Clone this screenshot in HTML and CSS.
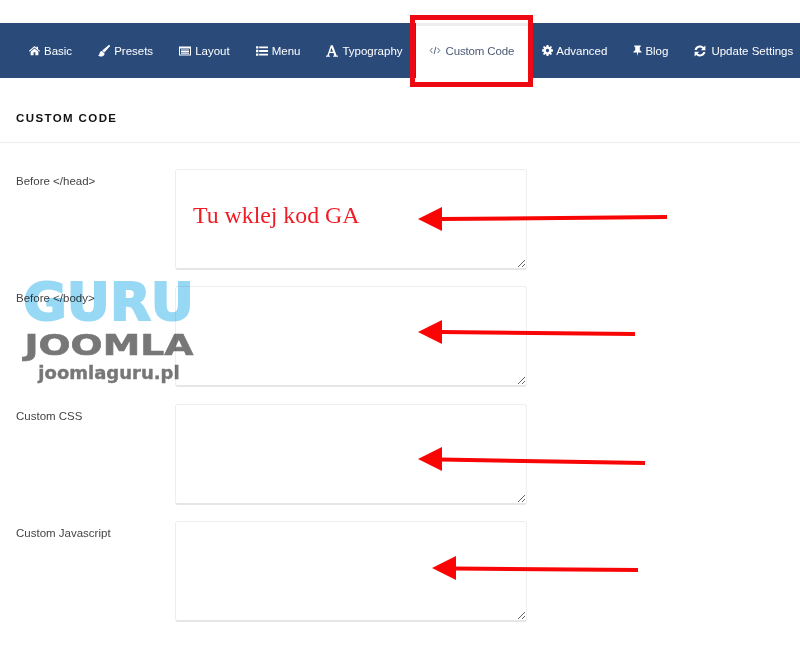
FILE: index.html
```html
<!DOCTYPE html>
<html lang="pl">
<head>
<meta charset="utf-8">
<title>Custom Code</title>
<link rel="stylesheet" href="styles.css">
</head>
<body>
<div class="page">
  <nav class="tabs">
    <a class="tab"><svg class="ico" viewBox="0 0 12 12"><path d="M6 1.200 0 6.400l.7.9L6 2.800l5.300 4.500.7-.9L9.800 4.500V1.800H8v1.200zM1.800 7.300V11.200h3.200V8h2v3.200h3.200V7.300L6 3.800z"/></svg>Basic</a>
    <a class="tab"><svg class="ico ico-brush" viewBox="0 0 12 12"><path d="M11.700.3c-.4-.4-1-.3-1.500.1L4.200 5.400l2.100 2.100 5.200-5.700c.5-.5.6-1.100.2-1.500zM3.800 5.900C2.300 6.100 1.700 7.300 1.500 8.500 1.400 9.600.9 10.200 0 10.600c1.500 1.400 4.700 1.400 6-.3.600-.8.600-1.600.2-2.200z"/></svg>Presets</a>
    <a class="tab"><svg class="ico ico-wide" viewBox="0 0 12 12"><path fill-rule="evenodd" d="M0 1.500h12v9H0zM1 3.500v6h10v-6zM2 4.400h8v1.100H2zM2 6.100h8v1.100H2zM2 7.800h8v.9H2z"/></svg>Layout</a>
    <a class="tab"><svg class="ico ico-list" viewBox="0 0 12 12"><path d="M0 1.200h2.400v2.400H0zM3.200 1.500h8.800v1.800H3.200zM0 4.800h2.400v2.400H0zM3.200 5.100h8.800v1.800H3.200zM0 8.400h2.400v2.400H0zM3.200 8.700h8.800v1.800H3.200z"/></svg>Menu</a>
    <a class="tab"><svg class="ico ico-wide" viewBox="0 0 12 12"><path fill-rule="evenodd" d="M4.800.3h2L10.600 10.500l1.400.3v1H7.200v-1l1.100-.3-.8-2.400H3.600l-.8 2.400 1.100.3v1H0v-1l1.300-.3zM5.500 2.700 4.100 6.800h2.900z"/></svg>Typography</a>
    <a class="tab tab-active"><svg class="ico ico-code" viewBox="0 0 12 12"><path d="M3.200 3.200.8 6l2.400 2.800M8.800 3.200 11.200 6 8.800 8.800M7 2 5 10" fill="none" stroke="currentColor"/></svg>Custom Code</a>
    <a class="tab"><svg class="ico ico-gear" viewBox="0 0 12 12"><path fill-rule="evenodd" d="M5 0h2l.3 1.700 1 .4L9.700 1.100l1.200 1.200-1 1.400.4 1 1.700.3v2l-1.700.3-.4 1 1 1.400-1.200 1.200-1.400-1-1 .4L7 12H5l-.3-1.700-1-.4-1.400 1-1.200-1.200 1-1.400-.4-1L0 7V5l1.700-.3.4-1-1-1.400L2.300 1.100l1.400 1 1-.4zM6 4.200a1.800 1.800 0 1 0 0 3.600 1.800 1.800 0 0 0 0-3.600z"/></svg>Advanced</a>
    <a class="tab"><svg class="ico ico-pin" viewBox="0 0 9 12"><path d="M1 .5h7v1.300L7 2.400v3.200C8.200 6.100 9 7 9 8.200H5.200L4.500 12l-.7-3.800H0C0 7 .8 6.100 2 5.600V2.400L1 1.800z"/></svg>Blog</a>
    <a class="tab"><svg class="ico ico-sync" viewBox="0 0 12 12"><path d="M.6 5C1 2.400 3.200.6 6 .6c1.500 0 2.800.6 3.800 1.500L11.400.6v4.600H6.800l1.700-1.700C7.800 2.900 7 2.500 6 2.500 4.500 2.500 3.100 3.500 2.700 5zM11.400 7c-.4 2.600-2.600 4.400-5.400 4.400-1.500 0-2.800-.6-3.800-1.500L.6 11.400V6.800h4.600L3.500 8.500c.7.6 1.500 1 2.500 1 1.500 0 2.900-1 3.300-2.500z"/></svg>Update Settings</a>
  </nav>

  <h2 class="section-title">CUSTOM CODE</h2>

  <form class="fields">
    <div class="field"><label class="field-label">Before &lt;/head&gt;</label><textarea class="field-input"></textarea></div>
    <div class="field"><label class="field-label">Before &lt;/body&gt;</label><textarea class="field-input"></textarea></div>
    <div class="field"><label class="field-label">Custom CSS</label><textarea class="field-input"></textarea></div>
    <div class="field"><label class="field-label">Custom Javascript</label><textarea class="field-input"></textarea></div>
  </form>

  <div class="note">Tu wklej kod GA</div>

  <div class="watermark">
    <div class="wm-guru">GURU</div>
    <div class="wm-joomla">JOOMLA</div>
    <div class="wm-url">joomlaguru.pl</div>
  </div>

  <svg class="marks" viewBox="0 0 800 659" width="800" height="659">
    <rect x="412.500" y="17.500" width="118" height="67" fill="none" stroke="#ee0a12" stroke-width="5"/>
    <g fill="#f80505" stroke="#f80505" stroke-width="4">
      <path d="M667 217 440 219"/>
      <path d="M635 334 440 332"/>
      <path d="M645 463 440 459.500"/>
      <path d="M638 570 454 568.500"/>
    </g>
    <g fill="#fb0404">
      <path d="M418 219 442 207V231z"/>
      <path d="M418 332 442 320V344z"/>
      <path d="M418 459 442 447V471z"/>
      <path d="M432 568 456 556V580z"/>
    </g>
  </svg>
</div>
</body>
</html>
```
FILE: styles.css
```css
* { box-sizing: border-box; }
html, body { margin: 0; padding: 0; background: #fff; }
body { font-family: "Liberation Sans", Arial, sans-serif; color: #333; overflow: hidden; }
.page { position: relative; width: 800px; height: 659px; padding-top: 23px; overflow: hidden; }

.tabs { display: flex; height: 55px; padding-left: 16px; background: #2a4a7a; }
.tab { display: flex; align-items: center; padding: 0 13px; color: #fff; font-size: 11.500px; white-space: nowrap; }
.ico { width: 11px; height: 11px; margin-right: 4px; fill: currentColor; flex: none; }
.ico-wide { width: 12px; height: 12px; }
.ico-brush { width: 12px; height: 12px; }
.ico-list { width: 12px; height: 12px; }
.ico-code { width: 12px; margin-right: 5px; }
.ico-gear { width: 11px; margin-right: 3px; }
.ico-pin { width: 9px; margin-right: 3px; }
.ico-sync { width: 12px; height: 12px; margin-right: 5px; }
.tab-active { background: #fff; color: #4b5a75; border-top: 3px solid #eeeeee; padding: 0 15px 3px 13px; letter-spacing: -.15px; }

.section-title { margin: 0; height: 65px; padding: 16px 16px 0; display: flex; align-items: center; border-bottom: 1px solid #ececec; color: #111; font-size: 11.500px; font-weight: 700; letter-spacing: 1.400px; }

.fields { display: flex; flex-direction: column; gap: 16.400px; padding: 26px 0 0 16px; }
.field { display: flex; align-items: flex-start; }
.field-label { width: 159px; padding-top: 5px; font-size: 11.500px; line-height: 14px; color: #444; }
.field-input { display: block; width: 352px; height: 101px; margin: 0; padding: 6px; border: 1px solid #eeeeee; border-bottom: 2px solid #e6e6e6; border-radius: 3px; background: #fff; outline: none; }

.note { position: absolute; left: 193px; top: 201px; color: #ee1c25; font-family: "Liberation Serif", "Times New Roman", serif; font-size: 23.800px; line-height: 28px; white-space: nowrap; }

.watermark { position: absolute; left: 23px; top: 272px; width: 172px; display: flex; flex-direction: column; align-items: center; font-family: "DejaVu Sans", sans-serif; font-weight: 700; pointer-events: none; mix-blend-mode: multiply; }
.wm-guru { height: 60px; font-size: 52px; line-height: 60px; color: #97d9f4; -webkit-text-stroke: 2px #97d9f4; transform: scaleX(1.02); white-space: nowrap; }
.wm-joomla { height: 30px; margin-top: -2px; font-size: 29px; line-height: 30px; color: #777; -webkit-text-stroke: .6px #777; transform: scaleX(1.3); white-space: nowrap; }
.wm-url { margin-top: 0; font-size: 18px; line-height: 26px; color: #777; -webkit-text-stroke: .4px #777; white-space: nowrap; }

.marks { position: absolute; left: 0; top: 0; pointer-events: none; }
```
